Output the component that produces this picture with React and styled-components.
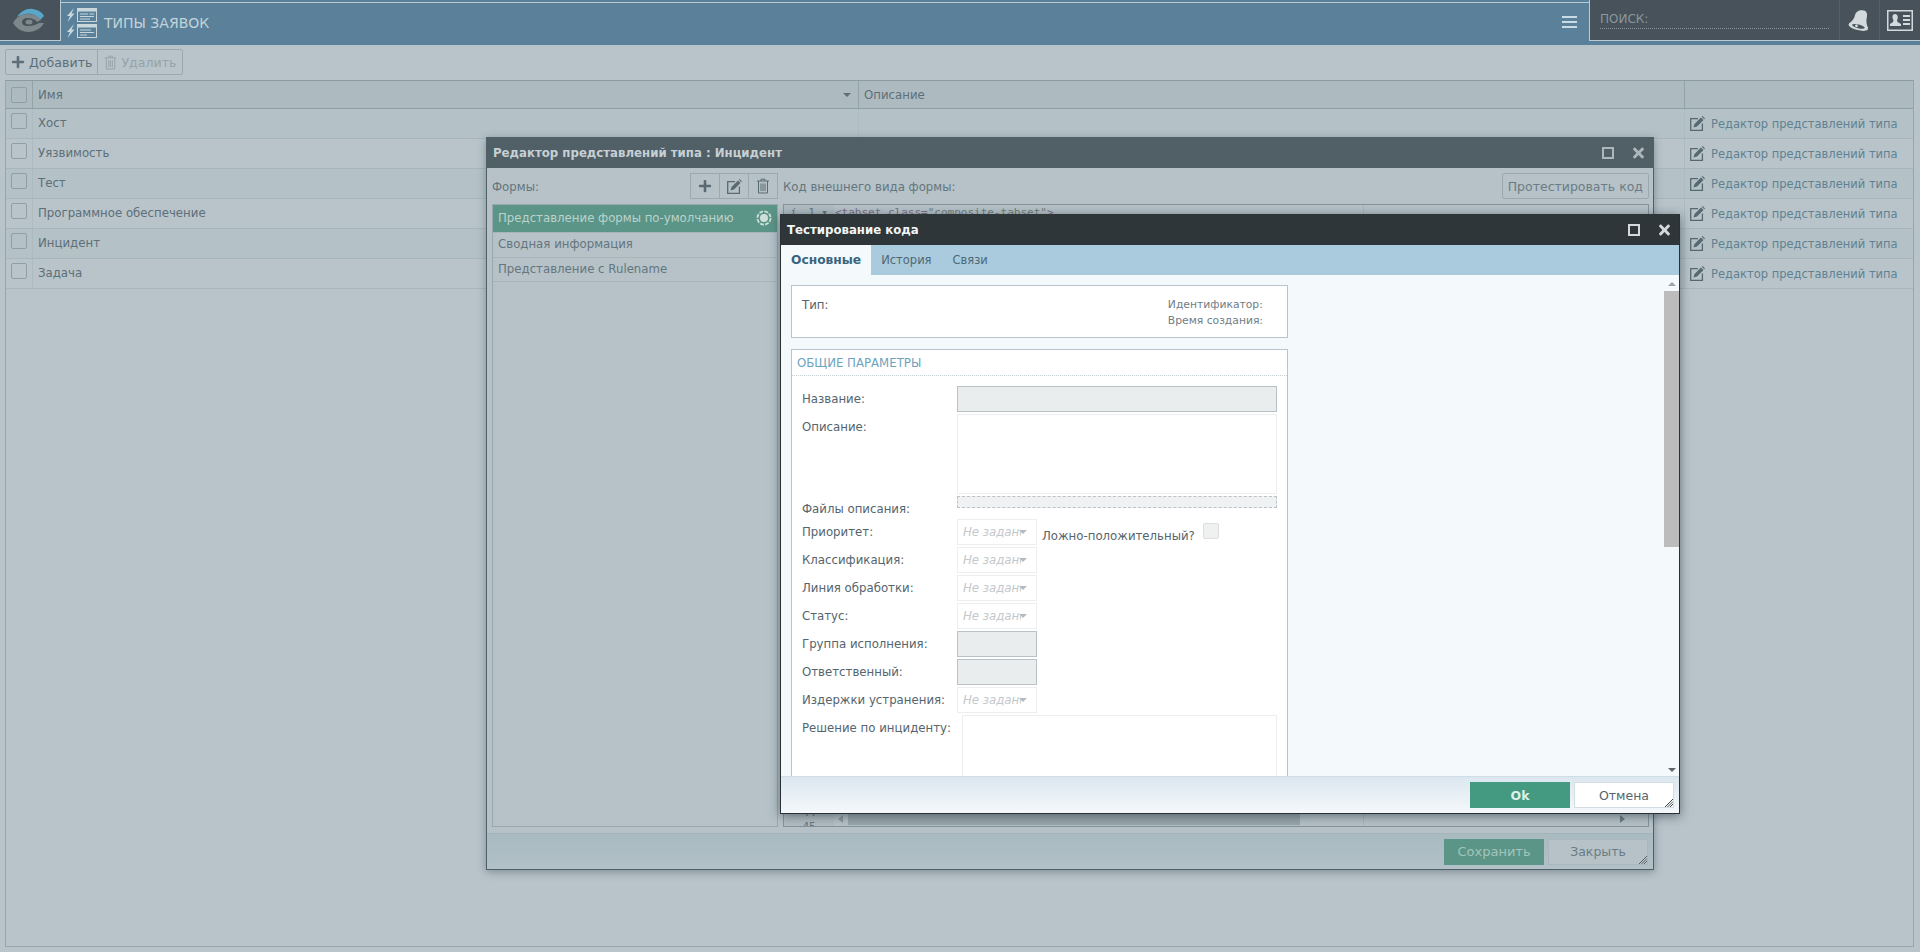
import React from 'react';
import styled, { createGlobalStyle } from 'styled-components';
import { FaPlus, FaTimes } from 'react-icons/fa';

const GlobalStyle = createGlobalStyle`
  html, body {
    margin: 0;
    padding: 0;
    height: 100%;
    overflow: hidden;
    background: #b8c3ca;
    font-family: "DejaVu Sans", Verdana, sans-serif;
    font-size: 11.75px;
    color: #5d6f78;
  }
  * { box-sizing: border-box; }
`;

const TYPES = ['Хост', 'Уязвимость', 'Тест', 'Программное обеспечение', 'Инцидент', 'Задача'];
const FORMS = ['Сводная информация', 'Представление с Rulename'];

const LogoIcon = () => (
  <svg width="32" height="24" viewBox="0 0 32 24">
    <path d="M4 9 C8 3 14 0 20 1 C25 2 29 4 31 8 L27 12 C24 7 18 5 13 6 C9 7 6 8 4 9Z" fill="#5aa6c8" />
    <path d="M0 15 C3 9 9 6 15 6 C21 6 26 9 28 12 L24 14 C22 11 18 10 15 10 C11 10 9 12 9 14 C9 17 12 18 15 18 C19 18 23 17 26 15 L31 15 C28 21 21 24 15 24 C9 24 3 20 0 15Z" fill="#7d888c" />
    <ellipse cx="16" cy="14" rx="3.5" ry="2.5" fill="#7d888c" />
  </svg>
);

const TypesIcon = () => (
  <svg width="31" height="30" viewBox="0 0 31 30" fill="#c9d6dc">
    <path d="M8 0 L1 8 H4 L1.5 14 L8.5 5.5 H5.5Z" />
    <path d="M8 16 L1 24 H4 L1.5 30 L8.5 21.5 H5.5Z" />
    <path fillRule="evenodd" d="M11 0 H31 V14 H11Z M12 3.5 V13 H30 V3.5Z" />
    <path d="M14 5.5 H22 V6.5 H14Z M14 8 H28 V9 H14Z M14 10.5 H24 V11.5 H14Z M23.5 5.5 H28 V6.5 H23.5Z" />
    <path fillRule="evenodd" d="M11 16 H31 V30 H11Z M12 19.5 V29 H30 V19.5Z" />
    <path d="M14 21.5 H25 V22.5 H14Z M14 24 H28 V25 H14Z M14 26.5 H21 V27.5 H14Z" />
  </svg>
);

const BurgerIcon = () => (
  <svg width="15" height="13" viewBox="0 0 15 13" fill="#c9dbe4">
    <path d="M0 0 H15 V2 H0Z M0 5 H15 V7 H0Z M0 10 H15 V12 H0Z" />
  </svg>
);

const BellIcon = () => (
  <svg width="24" height="24" viewBox="0 0 24 24">
    <g transform="rotate(14 12 12)">
      <path d="M12 2 C16 1 18 4 18 8 C18 12 20 16 22 18 C16 20 8 20 2 18 C5 15 6 12 6 8 C6 5 9 2 12 2Z" fill="#d3dade" />
      <ellipse cx="12" cy="19" rx="10" ry="3.4" fill="#d3dade" />
      <ellipse cx="12" cy="18.6" rx="6.5" ry="1.9" fill="#4a555b" />
      <circle cx="10" cy="18.6" r="1.4" fill="#d3dade" />
    </g>
  </svg>
);

const ContactIcon = () => (
  <svg width="26" height="21" viewBox="0 0 26 21">
    <path fillRule="evenodd" d="M0 0 H26 V21 H0Z M1.5 1.5 V19.5 H24.5 V1.5Z" fill="#d3dade" />
    <path d="M8 4 C11 4 11.5 8 10 10 L10.5 12 L14 14 V16 H3 V14 L6 12 L6.5 10 C5 8 5 4 8 4Z" fill="#d3dade" />
    <path d="M16 5 H23 V7 H16Z M16 9 H23 V11 H16Z M16 13 H23 V15 H16Z" fill="#d3dade" />
  </svg>
);

const TrashIcon = ({ size = 16 }) => (
  <svg width={size} height={size} viewBox="0 0 16 16" fill="none" stroke="currentColor" strokeWidth="1">
    <path d="M2 3 H14 M6 3 V1.2 H10 V3 M3.5 3 V15 H12.5 V3 M6 5.5 V13 M8 5.5 V13 M10 5.5 V13" />
  </svg>
);

const EditIcon = ({ size = 15 }) => (
  <svg width={size} height={size} viewBox="0 0 15 15">
    <path d="M8 2.6 H0.7 V14.3 H12.4 V7.5" fill="none" stroke="currentColor" strokeWidth="1.3" />
    <path d="M3.5 11.5 L4.5 8 L11 1.5 L13.5 4 L7 10.5Z M11.8 0.8 L12.6 0 L15 2.4 L14.2 3.2Z" fill="currentColor" />
  </svg>
);

const GearIcon = () => (
  <svg width="16" height="16" viewBox="0 0 16 16" fill="#cfe0db">
    <circle cx="8" cy="8" r="4" />
    <circle cx="8" cy="8" r="6.6" fill="none" stroke="#cfe0db" strokeWidth="1.8" strokeDasharray="3.9 1.3" />
  </svg>
);

const GripIcon = ({ color }) => (
  <svg width="8" height="8" viewBox="0 0 8 8" stroke={color} strokeWidth="1">
    <path d="M8 0 L0 8 M8 2.5 L2.5 8 M8 5 L5 8" />
  </svg>
);

const PageRoot = styled.div`
  display: flex;
  flex-direction: column;
  height: 100vh;
`;

const Header = styled.header`
  display: flex;
  height: 45px;
  flex: none;
  background: #5a8199;
`;

const LogoBox = styled.div`
  width: 61px;
  height: 41px;
  display: flex;
  align-items: center;
  justify-content: center;
  background: #47525a;
  border-bottom: 1px solid #b9cad3;
  border-right: 1px solid #b9cad3;
  padding: 0 2px 1px 0;
`;

const TabHead = styled.div`
  flex: 1;
  display: flex;
  align-items: center;
  gap: 7px;
  margin-top: 2px;
  padding: 1px 12px 2px 5px;
  border-top: 1px solid #b9cad3;
  height: 41px;
`;

const PageTitle = styled.div`
  font-size: 14px;
  color: #c3d3da;
  flex: 1;
  padding-top: 1px;
`;

const SearchArea = styled.div`
  width: 331px;
  height: 41px;
  display: flex;
  background: #47525a;
  border-left: 1px solid #b9cad3;
  border-bottom: 1px solid #b9cad3;
`;

const SearchField = styled.div`
  width: 229px;
  height: 29px;
  margin: 0 10px;
  border-bottom: 1px dotted #8c979d;
  color: #8c979d;
  padding-top: 12px;
  font-size: 12px;
  line-height: 14px;
`;

const HeaderButton = styled.div`
  width: 40px;
  display: flex;
  align-items: center;
  justify-content: center;
  border-left: 1px solid #545f66;
`;

const Toolbar = styled.div`
  display: flex;
  flex: none;
  margin: 4px 0 5px 5px;
  height: 26px;
`;

const ToolButton = styled.div`
  display: flex;
  align-items: center;
  gap: ${({ $joined }) => ($joined ? '3px' : '4px')};
  height: 26px;
  padding: 0 5px;
  font-size: 12.6px;
  border: 1px solid #9ba9af;
  margin-left: ${({ $joined }) => ($joined ? '-1px' : '0')};
  color: ${({ $disabled }) => ($disabled ? '#94a3a9' : '#5d6f78')};
  border-radius: ${({ $joined }) => ($joined ? '0 2px 2px 0' : '2px 0 0 2px')};
`;

const TablePanel = styled.div`
  height: 867px;
  margin: 0 6px 0 5px;
  border: 1px solid #98a6ac;
  border-top-color: #8c9ca3;
`;

const gridColumns = '26px 826px 826px 1fr';

const HeadRow = styled.div`
  display: grid;
  grid-template-columns: ${gridColumns};
  height: 28px;
  background: #adbbc1;
  border-bottom: 1px solid #8c9ea6;
`;

const DataRow = styled.div`
  display: grid;
  grid-template-columns: ${gridColumns};
  height: 30px;
  background: ${({ $alt }) => ($alt ? '#b8c4ca' : '#b4c1c7')};
  border-bottom: 1px solid #a7b6bc;
`;

const Cell = styled.div`
  display: flex;
  align-items: center;
  padding: 0 5px;
  padding-bottom: ${({ $name }) => ($name ? '2px' : '0')};
  border-left: 1px solid ${({ $head }) => ($head ? '#92a3aa' : '#adbbc1')};
  min-width: 0;
  &:first-child { border-left: 0; }
`;

const CheckCell = styled.div`
  display: flex;
  justify-content: center;
  padding-top: ${({ $head }) => ($head ? '6px' : '4px')};
`;

const Check = styled.div`
  width: 16px;
  height: 16px;
  border: 1px solid #8f9fa6;
  border-radius: 2px;
  background: ${({ $light }) => ($light ? '#eff1f1' : 'transparent')};
  border-color: ${({ $light }) => ($light ? '#dcdfe0' : '#8f9fa6')};
`;

const SortCell = styled(Cell)`
  justify-content: space-between;
  padding-right: 7px;
`;

const SortArrow = styled.span`
  width: 0;
  height: 0;
  border-left: 4px solid transparent;
  border-right: 4px solid transparent;
  border-top: 4px solid #5d6f78;
`;

const EditLink = styled.div`
  display: flex;
  align-items: center;
  gap: 6px;
  font-size: 11.5px;
  color: #5f8291;
  svg { color: #566870; flex: none; }
`;

const Window = styled.section`
  position: absolute;
  display: flex;
  flex-direction: column;
  overflow: hidden;
`;

const EditorWindow = styled(Window)`
  left: 486px;
  top: 137px;
  width: 1168px;
  height: 733px;
  background: #b6c2c8;
  border: 1px solid #515f66;
  border-top: 0;
  box-shadow: 0 2px 8px rgba(60, 75, 85, 0.45);
`;

const TestWindow = styled(Window)`
  left: 780px;
  top: 214px;
  width: 900px;
  height: 600px;
  background: #f4f9fc;
  border: 1px solid #2a3134;
  border-top: 0;
  box-shadow: 0 2px 10px rgba(30, 40, 50, 0.55);
`;

const TitleBar = styled.div`
  flex: none;
  display: flex;
  align-items: center;
  height: 31px;
  padding: 0 8px 0 6px;
  gap: 18px;
  font-weight: bold;
  background: ${({ $dark }) => ($dark ? '#2f363a' : '#515f66')};
  color: ${({ $dark }) => ($dark ? '#f2f5f6' : '#c6d0d4')};
`;

const TitleText = styled.div`
  flex: 1;
`;

const MaxBox = styled.div`
  width: 12px;
  height: 12px;
  border: 2px solid ${({ $dark }) => ($dark ? '#d4d9db' : '#adb7bc')};
`;

const CloseIcon = styled(FaTimes)`
  width: 13px;
  height: 16px;
  color: ${({ $dark }) => ($dark ? '#d4d9db' : '#adb7bc')};
`;

const EditorBody = styled.div`
  flex: 1;
  display: grid;
  grid-template-columns: 286px 866px;
  grid-template-rows: 36px 623px;
  column-gap: 5px;
  padding: 0 4px 0 5px;
`;

const PaneHead = styled.div`
  display: flex;
  align-items: center;
  justify-content: space-between;
  padding-top: 1px;
  color: #64767e;
`;

const IconGroup = styled.div`
  display: flex;
  height: 26px;
  margin-top: -1px;
`;

const IconButton = styled.div`
  width: 30px;
  display: flex;
  align-items: center;
  justify-content: center;
  border: 1px solid #9ba9af;
  margin-left: -1px;
  color: #5a6a72;
`;

const PlainButton = styled.div`
  height: 26px;
  margin-top: -1px;
  padding: 0 5px;
  display: flex;
  align-items: center;
  font-size: 12.5px;
  border: 1px solid #9ba9af;
  border-radius: 2px;
  color: #6b7c84;
`;

const FormList = styled.div`
  border: 1px solid #9aa8ae;
  overflow: hidden;
`;

const FormItem = styled.div`
  height: ${({ $active }) => ($active ? '28px' : '24.5px')};
  display: flex;
  align-items: center;
  justify-content: space-between;
  padding: 0 5px ${({ $active }) => ($active ? '2px' : '1px')};
  color: ${({ $active }) => ($active ? '#bcd2cd' : '#64767e')};
  background: ${({ $active }) => ($active ? '#5b9587' : 'transparent')};
  border-bottom: 1px solid #a8b6bc;
`;

const CodeBox = styled.div`
  display: flex;
  border: 1px solid #83949c;
  overflow: hidden;
  font-family: "DejaVu Sans Mono", monospace;
  font-size: 11px;
`;

const Gutter = styled.div`
  width: 50px;
  flex: none;
  display: flex;
  flex-direction: column;
  justify-content: space-between;
  background: #b0bcc2;
  color: #63737b;
  padding: 1px 6px 0 6px;
  line-height: 14px;
`;

const GutterLine = styled.div`
  display: flex;
  justify-content: space-between;
`;

const GutterFoot = styled.div`
  text-align: center;
  margin-bottom: -8px;
`;

const CodeArea = styled.div`
  position: relative;
  flex: 1;
  display: flex;
  flex-direction: column;
  justify-content: space-between;
  line-height: 14px;
  padding-top: 1px;
  color: #65757c;
`;

const PrintMargin = styled.div`
  position: absolute;
  left: 529px;
  top: 0;
  bottom: 0;
  width: 1px;
  background: #a9b5bb;
`;

const CodeLine = styled.div`
  padding-left: 1px;
  white-space: pre;
  color: #7d6f86;
  span { color: #6f7f78; }
`;

const HScroll = styled.div`
  display: flex;
  align-items: center;
  height: 12px;
  margin-bottom: 1px;
  gap: 5px;
  padding: 0 23px 0 4px;
`;

const ScrollArrow = styled.span`
  width: 0;
  height: 0;
  border-top: 4px solid transparent;
  border-bottom: 4px solid transparent;
  border-left: ${({ $right }) => ($right ? '5px solid #6d7d84' : '0')};
  border-right: ${({ $right }) => ($right ? '0' : '5px solid #8a989e')};
`;

const HThumb = styled.div`
  width: 452px;
  height: 12px;
  background: #98a6ac;
  margin-right: auto;
`;

const BottomBar = styled.div`
  grid-column: 1 / -1;
  flex: 1;
  margin: 6px -4px 0 -5px;
  display: flex;
  justify-content: flex-end;
  align-items: center;
  gap: 4px;
  padding: 0 5px 0 0;
  background: linear-gradient(#a9bac1, #b2c0c7);
  border-top: 1px solid #a3b3ba;
`;

const DialogButton = styled.div`
  position: relative;
  width: 100px;
  height: 26px;
  display: flex;
  align-items: center;
  justify-content: center;
  font-size: ${({ $big }) => ($big ? '13px' : '12.5px')};
  background: ${({ $bg }) => $bg};
  color: ${({ $color }) => $color};
  font-weight: ${({ $bold }) => ($bold ? 'bold' : 'normal')};
  border: 1px solid ${({ $line }) => $line};
`;

const Grip = styled.span`
  position: absolute;
  right: 0;
  bottom: 0;
  display: flex;
`;

const Tabs = styled.div`
  flex: none;
  height: 30px;
  display: flex;
  background: #a9cbdd;
`;

const Tab = styled.div`
  padding: 0 10px;
  display: flex;
  align-items: center;
  font-size: ${({ $active }) => ($active ? '12.25px' : '11.5px')};
  background: ${({ $active }) => ($active ? '#f4f9fc' : 'transparent')};
  color: ${({ $active }) => ($active ? '#376580' : '#4f6875')};
  font-weight: ${({ $active }) => ($active ? 'bold' : 'normal')};
  margin-right: ${({ $active }) => ($active ? '0' : '1px')};
`;

const ScrollWrap = styled.div`
  flex: 1;
  min-height: 0;
  display: flex;
  overflow: hidden;
`;

const FormScroll = styled.div`
  width: 883px;
  padding: 10px 0 0 10px;
  overflow: hidden;
`;

const VScroll = styled.div`
  flex: 1;
  display: flex;
  flex-direction: column;
  align-items: center;
  padding: 7px 0 4px;
`;

const VThumb = styled.div`
  width: 100%;
  height: 256px;
  margin: 5px 0 auto;
  background: #bcbcbc;
`;

const VArrow = styled.span`
  width: 0;
  height: 0;
  border-left: 4px solid transparent;
  border-right: 4px solid transparent;
  border-bottom: ${({ $down }) => ($down ? '0' : '4px solid #9aa3a8')};
  border-top: ${({ $down }) => ($down ? '4px solid #5e666b' : '0')};
`;

const Card = styled.div`
  width: 497px;
  background: #fff;
  border: 1px solid #b9c4cc;
`;

const InfoCard = styled(Card)`
  height: 53px;
  margin-bottom: 11px;
  display: flex;
  justify-content: space-between;
  padding: 11px 24px 0 10px;
  line-height: 16px;
  color: #55656d;
`;

const InfoMeta = styled.div`
  font-size: 10.75px;
  color: #6f7d85;
`;

const CardTitle = styled.div`
  height: 26px;
  padding: 6px 5px 0;
  color: #6ea3bd;
  line-height: 15px;
  border-bottom: 1px dotted #c4ced3;
`;

const FormBody = styled.div`
  display: flex;
  flex-direction: column;
  gap: 2px;
  padding: 10px 10px 0 10px;
  height: 500px;
`;

const FormRow = styled.div`
  display: flex;
  height: ${({ $h }) => $h || 26}px;
  color: #55656d;
`;

const Label = styled.div`
  width: ${({ $w }) => $w || 155}px;
  flex: none;
  padding-top: 6px;
  line-height: 15px;
`;

const TextBox = styled.div`
  width: ${({ $short }) => ($short ? '80px' : '')};
  flex: ${({ $short }) => ($short ? 'none' : '1')};
  background: ${({ $disabled }) => ($disabled ? '#e9edee' : '#fff')};
  border: 1px solid ${({ $disabled }) => ($disabled ? '#b8c1c5' : '#eceef0')};
`;

const DropZone = styled.div`
  flex: 1;
  height: 12px;
  background: #f0f1f2;
  border: 1px dashed #bcc3c7;
`;

const SelectBox = styled.div`
  width: 80px;
  flex: none;
  display: flex;
  align-items: center;
  justify-content: space-between;
  padding: 0 9px 0 5px;
  border: 1px solid #eceef0;
  color: #c3c8cb;
  font-style: italic;
  overflow: hidden;
  white-space: nowrap;
`;

const SelectText = styled.span`
  width: 58px;
  overflow: hidden;
`;

const SelectArrow = styled.span`
  flex: none;
  margin-left: -4px;
  width: 0;
  height: 0;
  border-left: 4px solid transparent;
  border-right: 4px solid transparent;
  border-top: 4px solid #b4bbbf;
`;

const FalseLabel = styled.div`
  margin-left: 5px;
  padding-top: 10px;
  line-height: 15px;
  width: 161px;
`;

const CheckWrap = styled.div`
  padding-top: 4px;
`;

const DialogFooter = styled.div`
  flex: none;
  height: 37px;
  display: flex;
  justify-content: flex-end;
  align-items: center;
  gap: 4px;
  padding-right: 5px;
  background: linear-gradient(#dbe7ef, #f4f8fb);
  border-top: 1px solid #cfdde6;
`;

const Select = () => (
  <SelectBox>
    <SelectText>Не задано</SelectText>
    <SelectArrow />
  </SelectBox>
);

const SelectRow = ({ label, children }) => (
  <FormRow>
    <Label>{label}</Label>
    <Select />
    {children}
  </FormRow>
);

export default function App() {
  return (
    <>
      <GlobalStyle />
      <PageRoot>
        <Header>
          <LogoBox><LogoIcon /></LogoBox>
          <TabHead>
            <TypesIcon />
            <PageTitle>ТИПЫ ЗАЯВОК</PageTitle>
            <BurgerIcon />
          </TabHead>
          <SearchArea>
            <SearchField>ПОИСК:</SearchField>
            <HeaderButton><BellIcon /></HeaderButton>
            <HeaderButton><ContactIcon /></HeaderButton>
          </SearchArea>
        </Header>
        <Toolbar>
          <ToolButton><FaPlus size={14} />Добавить</ToolButton>
          <ToolButton $joined $disabled><TrashIcon size={15} />Удалить</ToolButton>
        </Toolbar>
        <TablePanel>
          <HeadRow>
            <CheckCell $head><Check /></CheckCell>
            <SortCell $head>Имя<SortArrow /></SortCell>
            <Cell $head>Описание</Cell>
            <Cell $head />
          </HeadRow>
          {TYPES.map((name, i) => (
            <DataRow key={name} $alt={i % 2 === 1}>
              <CheckCell><Check /></CheckCell>
              <Cell $name>{name}</Cell>
              <Cell />
              <Cell>
                <EditLink><EditIcon />Редактор представлений типа</EditLink>
              </Cell>
            </DataRow>
          ))}
        </TablePanel>
      </PageRoot>

      <EditorWindow>
        <TitleBar>
          <TitleText>Редактор представлений типа : Инцидент</TitleText>
          <MaxBox />
          <CloseIcon />
        </TitleBar>
        <EditorBody>
          <PaneHead>
            Формы:
            <IconGroup>
              <IconButton><FaPlus size={14} /></IconButton>
              <IconButton><EditIcon /></IconButton>
              <IconButton><TrashIcon /></IconButton>
            </IconGroup>
          </PaneHead>
          <PaneHead>
            Код внешнего вида формы:
            <PlainButton>Протестировать код</PlainButton>
          </PaneHead>
          <FormList>
            <FormItem $active>Представление формы по-умолчанию<GearIcon /></FormItem>
            {FORMS.map((name) => <FormItem key={name}>{name}</FormItem>)}
          </FormList>
          <CodeBox>
            <Gutter>
              <GutterLine><i>i</i><span>1 ▾</span></GutterLine>
              <GutterFoot>44<br />45</GutterFoot>
            </Gutter>
            <CodeArea>
              <PrintMargin />
              <CodeLine>&lt;tabset class=<span>"composite-tabset"</span>&gt;</CodeLine>
              <HScroll>
                <ScrollArrow />
                <HThumb />
                <ScrollArrow $right />
              </HScroll>
            </CodeArea>
          </CodeBox>
          <BottomBar>
            <DialogButton $big $bg="#5b9587" $color="#a3c4bb" $line="#5b9587">Сохранить</DialogButton>
            <DialogButton $bg="#b6c2c8" $color="#6b7c84" $line="#a9b6bc">
              Закрыть
              <Grip><GripIcon color="#55636a" /></Grip>
            </DialogButton>
          </BottomBar>
        </EditorBody>
      </EditorWindow>

      <TestWindow>
        <TitleBar $dark>
          <TitleText>Тестирование кода</TitleText>
          <MaxBox $dark />
          <CloseIcon $dark />
        </TitleBar>
        <Tabs>
          <Tab $active>Основные</Tab>
          <Tab>История</Tab>
          <Tab>Связи</Tab>
        </Tabs>
        <ScrollWrap>
          <FormScroll>
            <InfoCard>
              <div>Тип:</div>
              <InfoMeta>Идентификатор:<br />Время создания:</InfoMeta>
            </InfoCard>
            <Card>
              <CardTitle>ОБЩИЕ ПАРАМЕТРЫ</CardTitle>
              <FormBody>
                <FormRow>
                  <Label>Название:</Label>
                  <TextBox $disabled />
                </FormRow>
                <FormRow $h={80}>
                  <Label>Описание:</Label>
                  <TextBox />
                </FormRow>
                <FormRow $h={21}>
                  <Label>Файлы описания:</Label>
                  <DropZone />
                </FormRow>
                <SelectRow label="Приоритет:">
                  <FalseLabel>Ложно-положительный?</FalseLabel>
                  <CheckWrap><Check $light /></CheckWrap>
                </SelectRow>
                <SelectRow label="Классификация:" />
                <SelectRow label="Линия обработки:" />
                <SelectRow label="Статус:" />
                <FormRow>
                  <Label>Группа исполнения:</Label>
                  <TextBox $short $disabled />
                </FormRow>
                <FormRow>
                  <Label>Ответственный:</Label>
                  <TextBox $short $disabled />
                </FormRow>
                <SelectRow label="Издержки устранения:" />
                <FormRow $h={90}>
                  <Label $w={160}>Решение по инциденту:</Label>
                  <TextBox />
                </FormRow>
              </FormBody>
            </Card>
          </FormScroll>
          <VScroll>
            <VArrow />
            <VThumb />
            <VArrow $down />
          </VScroll>
        </ScrollWrap>
        <DialogFooter>
          <DialogButton $bg="#449a80" $color="#dcefe8" $line="#449a80" $bold>Ok</DialogButton>
          <DialogButton $bg="#fff" $color="#55656d" $line="#d3dde3">
            Отмена
            <Grip><GripIcon color="#3a4448" /></Grip>
          </DialogButton>
        </DialogFooter>
      </TestWindow>
    </>
  );
}
